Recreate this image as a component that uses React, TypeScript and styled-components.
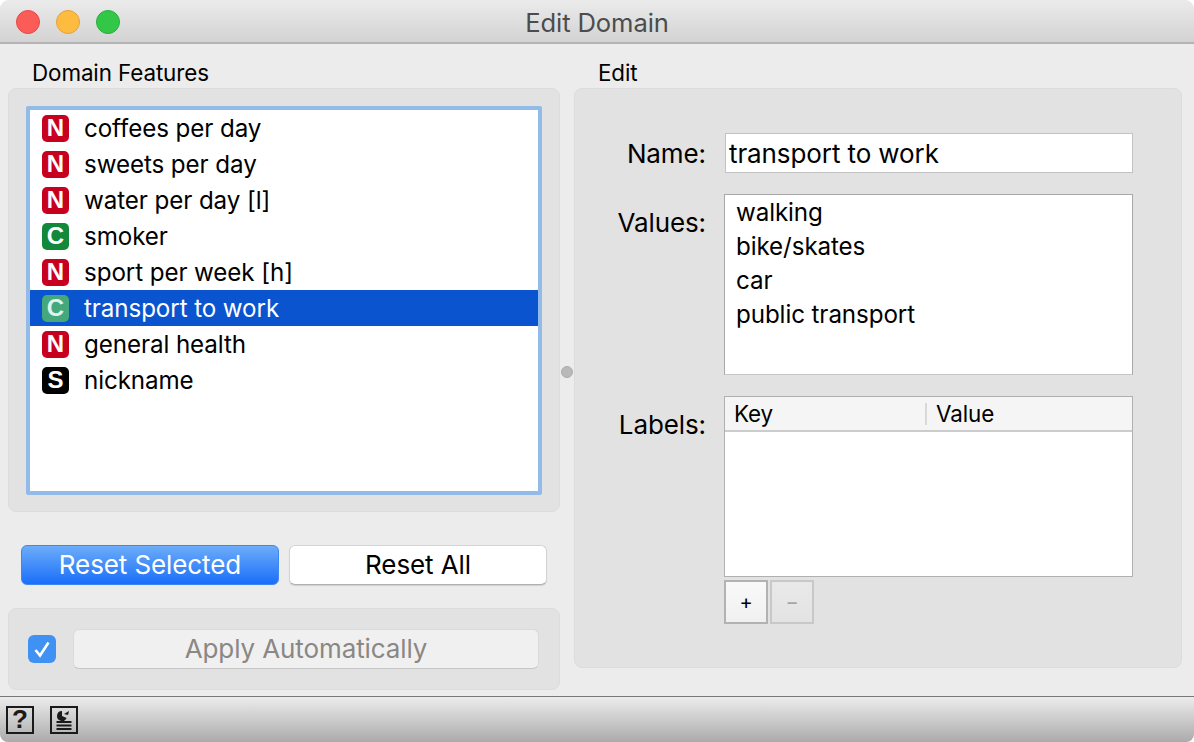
import React from "react";
import styled, { createGlobalStyle } from "styled-components";

const GlobalStyle = createGlobalStyle`
  html, body {
    margin: 0;
    padding: 0;
    background: #fff;
  }
  * {
    box-sizing: border-box;
  }
`;

const SWindow = styled.div`
  width: 1194px;
  height: 742px;
  display: flex;
  flex-direction: column;
  overflow: hidden;
  border-radius: 9px 9px 8px 8px;
  background: #ececec;
  color: #000;
  font-family: Inter, "Liberation Sans", sans-serif;
  font-size: 26px;
  letter-spacing: -0.1px;
`;

const STitleBar = styled.div`
  position: relative;
  height: 44px;
  flex: none;
  display: flex;
  align-items: center;
  justify-content: center;
  padding-top: 2px;
  background: linear-gradient(#ebebeb, #d3d3d3);
  border-bottom: 2px solid #b4b4b4;
  color: #4c4c4c;
  font-size: 25.6px;
`;

const STrafficLights = styled.div`
  position: absolute;
  left: 16px;
  top: 10px;
  display: flex;
  gap: 16px;
`;

const SLight = styled.span<{ $fill: string; $edge: string }>`
  width: 24px;
  height: 24px;
  border-radius: 50%;
  background: ${({ $fill }) => $fill};
  border: 1px solid ${({ $edge }) => $edge};
`;

const SMain = styled.div`
  flex: 1;
  display: flex;
  padding: 0 12px 6px 8px;
  min-height: 0;
`;

const SLeftColumn = styled.div`
  width: 552px;
  flex: none;
  display: flex;
  flex-direction: column;
`;

const SGroupLabel = styled.div`
  height: 44px;
  flex: none;
  display: flex;
  align-items: flex-end;
  padding: 0 0 0 24px;
  font-size: 22.4px;
  line-height: 30px;
`;

const SPanel = styled.div`
  background: #e2e2e2;
  border: 1px solid #dcdcdc;
  border-radius: 8px;
`;

const SListPanel = styled(SPanel as any)`
  height: 424px;
  flex: none;
  padding: 17px;
`;

const SList = styled.div`
  height: 389px;
  background: #fff;
  border: 4px solid #92bbe9;
  border-radius: 2px;
  font-size: 24.2px;
`;

const SRow = styled.div<{ $selected?: boolean }>`
  height: 36px;
  display: flex;
  align-items: center;
  padding-left: 12px;
  gap: 15px;
  background: ${({ $selected }) => ($selected ? "#0a54d0" : "transparent")};
  color: ${({ $selected }) => ($selected ? "#fff" : "#000")};
`;

const SBadge = styled.span<{ $bg: string; $muted?: boolean }>`
  width: 27px;
  height: 27px;
  flex: none;
  display: flex;
  align-items: center;
  justify-content: center;
  border-radius: 5px;
  background: ${({ $bg }) => $bg};
  color: ${({ $muted }) => ($muted ? "#dff3ee" : "#fff")};
  font-family: "Liberation Sans", sans-serif;
  font-size: 24px;
  font-weight: 700;
  letter-spacing: 0;
`;

const SButtonRow = styled.div`
  display: flex;
  gap: 10px;
  margin: 33px 0 23px 13px;
`;

const SPrimaryButton = styled.div`
  width: 258px;
  height: 40px;
  display: flex;
  align-items: center;
  justify-content: center;
  padding-bottom: 2px;
  border-radius: 6px;
  background: linear-gradient(#6cacf9, #1a6ffa);
  border: 1px solid #3e87ee;
  color: #fff;
`;

const SPlainButton = styled.div`
  width: 258px;
  height: 40px;
  display: flex;
  align-items: center;
  justify-content: center;
  padding-bottom: 2px;
  border-radius: 6px;
  background: #fff;
  border: 1px solid #d4d4d4;
  border-bottom-color: #b0b0b0;
  box-shadow: 0 1px 1px rgba(0, 0, 0, 0.12);
`;

const SApplyPanel = styled(SPanel as any)`
  flex: 1;
  display: flex;
  align-items: center;
  padding: 0 20px 0 19px;
  gap: 17px;
`;

const SCheckbox = styled.span`
  width: 28px;
  height: 28px;
  flex: none;
  display: flex;
  align-items: center;
  justify-content: center;
  border-radius: 6px;
  background: #3f92f4;
`;

const SApplyButton = styled.div`
  flex: 1;
  height: 40px;
  display: flex;
  align-items: center;
  justify-content: center;
  padding-bottom: 2px;
  border-radius: 6px;
  background: #f0f0f0;
  border: 1px solid #dadada;
  border-bottom-color: #c6c6c6;
  color: #8a8784;
`;

const SSplitter = styled.div`
  width: 14px;
  flex: none;
  display: flex;
  align-items: center;
  justify-content: center;
  padding-top: 10px;
`;

const SHandle = styled.span`
  width: 12px;
  height: 12px;
  border-radius: 50%;
  background: #b9b9b9;
  border: 1px solid #acacac;
`;

const SRightColumn = styled.div`
  width: 608px;
  flex: none;
  display: flex;
  flex-direction: column;
`;

const SEditPanel = styled(SPanel as any)`
  height: 580px;
  flex: none;
  display: grid;
  grid-template-columns: 131px 409px;
  grid-template-rows: 40px 181px auto;
  column-gap: 18px;
  row-gap: 21px;
  padding-top: 44px;
  align-content: start;
`;

const SFieldLabel = styled.div<{ $top: number }>`
  text-align: right;
  line-height: 30px;
  padding-top: ${({ $top }) => $top}px;
`;

const SNameInput = styled.div`
  height: 40px;
  display: flex;
  align-items: center;
  padding: 0 0 0 3px;
  margin-left: 1px;
  background: #fff;
  border: 1px solid #c2c2c2;
`;

const SValuesBox = styled.div`
  height: 181px;
  padding: 1px 0 0 11px;
  background: #fff;
  border: 1px solid #a8a8a8;
  border-bottom-color: #c6c6c6;
  font-size: 24.2px;
`;

const SValueRow = styled.div`
  height: 34px;
  line-height: 34px;
`;

const STable = styled.div`
  height: 181px;
  background: #fff;
  border: 1px solid #b0b0b0;
`;

const STableHead = styled.div`
  height: 35px;
  display: flex;
  align-items: center;
  background: #f5f5f5;
  border-bottom: 2px solid #cccccc;
  font-size: 22.4px;
`;

const SHeadCell = styled.div<{ $width: number; $divider?: boolean }>`
  width: ${({ $width }) => $width}px;
  height: 22px;
  display: flex;
  align-items: center;
  padding-left: 9px;
  border-left: ${({ $divider }) => ($divider ? "2px solid #d8d8d8" : "none")};
`;

const SToolRow = styled.div`
  display: flex;
  gap: 2px;
  margin-top: 3px;
`;

const SToolButton = styled.div<{ $disabled?: boolean }>`
  width: 44px;
  height: 44px;
  display: flex;
  align-items: center;
  justify-content: center;
  background: ${({ $disabled }) =>
    $disabled ? "linear-gradient(#e9e9e9, #e3e3e3)" : "linear-gradient(#f9f9f9, #f0f0f0)"};
  border: 2px solid ${({ $disabled }) => ($disabled ? "#c8c8c8" : "#b2b2b2")};
  color: ${({ $disabled }) => ($disabled ? "#a5a5a5" : "#000")};
  font-size: 20px;
`;

const SFooter = styled.div`
  height: 46px;
  flex: none;
  display: flex;
  align-items: center;
  gap: 16px;
  padding: 0 0 0 6px;
  background: linear-gradient(#ececec, #ababab);
  border-top: 1px solid #777;
`;

const SFooterIcon = styled.div`
  width: 28px;
  height: 28px;
  display: flex;
  align-items: center;
  justify-content: center;
  border: 2px solid #1a1a1a;
  color: #1a1a1a;
  font-family: "Liberation Sans", sans-serif;
  font-size: 26px;
  font-weight: 700;
  letter-spacing: 0;
`;

const N = "#c8001f";
const C = "#14883a";
const S = "#000";

const features = [
  { kind: "N", bg: N, name: "coffees per day" },
  { kind: "N", bg: N, name: "sweets per day" },
  { kind: "N", bg: N, name: "water per day [l]" },
  { kind: "C", bg: C, name: "smoker" },
  { kind: "N", bg: N, name: "sport per week [h]" },
  { kind: "C", bg: "#45a77c", name: "transport to work", selected: true },
  { kind: "N", bg: N, name: "general health" },
  { kind: "S", bg: S, name: "nickname" },
];

const values = ["walking", "bike/skates", "car", "public transport"];

const App = () => {
  return (
    <SWindow>
      <GlobalStyle />
      <STitleBar>
        <STrafficLights>
          <SLight $fill="#fc5c57" $edge="#e5484a" />
          <SLight $fill="#fdbc40" $edge="#e5a13a" />
          <SLight $fill="#33c748" $edge="#2bac3c" />
        </STrafficLights>
        Edit Domain
      </STitleBar>

      <SMain>
        <SLeftColumn>
          <SGroupLabel>Domain Features</SGroupLabel>
          <SListPanel>
            <SList>
              {features.map((f) => (
                <SRow key={f.name} $selected={f.selected}>
                  <SBadge $bg={f.bg} $muted={f.selected}>
                    {f.kind}
                  </SBadge>
                  <span>{f.name}</span>
                </SRow>
              ))}
            </SList>
          </SListPanel>

          <SButtonRow>
            <SPrimaryButton>Reset Selected</SPrimaryButton>
            <SPlainButton>Reset All</SPlainButton>
          </SButtonRow>

          <SApplyPanel>
            <SCheckbox>
              <svg width="20" height="20" viewBox="0 0 20 20" fill="none">
                <path d="M3.5 11l4.5 5.5L16.5 3.5" stroke="#fff" strokeWidth="2.6" />
              </svg>
            </SCheckbox>
            <SApplyButton>Apply Automatically</SApplyButton>
          </SApplyPanel>
        </SLeftColumn>

        <SSplitter>
          <SHandle />
        </SSplitter>

        <SRightColumn>
          <SGroupLabel>Edit</SGroupLabel>
          <SEditPanel>
            <SFieldLabel $top={6}>Name:</SFieldLabel>
            <SNameInput>transport to work</SNameInput>

            <SFieldLabel $top={14}>Values:</SFieldLabel>
            <SValuesBox>
              {values.map((v) => (
                <SValueRow key={v}>{v}</SValueRow>
              ))}
            </SValuesBox>

            <SFieldLabel $top={14}>Labels:</SFieldLabel>
            <div>
              <STable>
                <STableHead>
                  <SHeadCell $width={200}>Key</SHeadCell>
                  <SHeadCell $width={206} $divider>
                    Value
                  </SHeadCell>
                </STableHead>
              </STable>
              <SToolRow>
                <SToolButton>+</SToolButton>
                <SToolButton $disabled>−</SToolButton>
              </SToolRow>
            </div>
          </SEditPanel>
        </SRightColumn>
      </SMain>

      <SFooter>
        <SFooterIcon>?</SFooterIcon>
        <SFooterIcon>
          <svg width="24" height="24" viewBox="0 0 24 24" fill="#1a1a1a">
            <path d="M10 3a5 5 0 1 0 4.6 7L10 8z" />
            <path d="M12 6l5-3-1 4z" />
            <rect x="4.5" y="13" width="15" height="2" />
            <rect x="4.5" y="16.5" width="15" height="2" />
            <rect x="4.5" y="20" width="15" height="2" />
          </svg>
        </SFooterIcon>
      </SFooter>
    </SWindow>
  );
};

export default App;
